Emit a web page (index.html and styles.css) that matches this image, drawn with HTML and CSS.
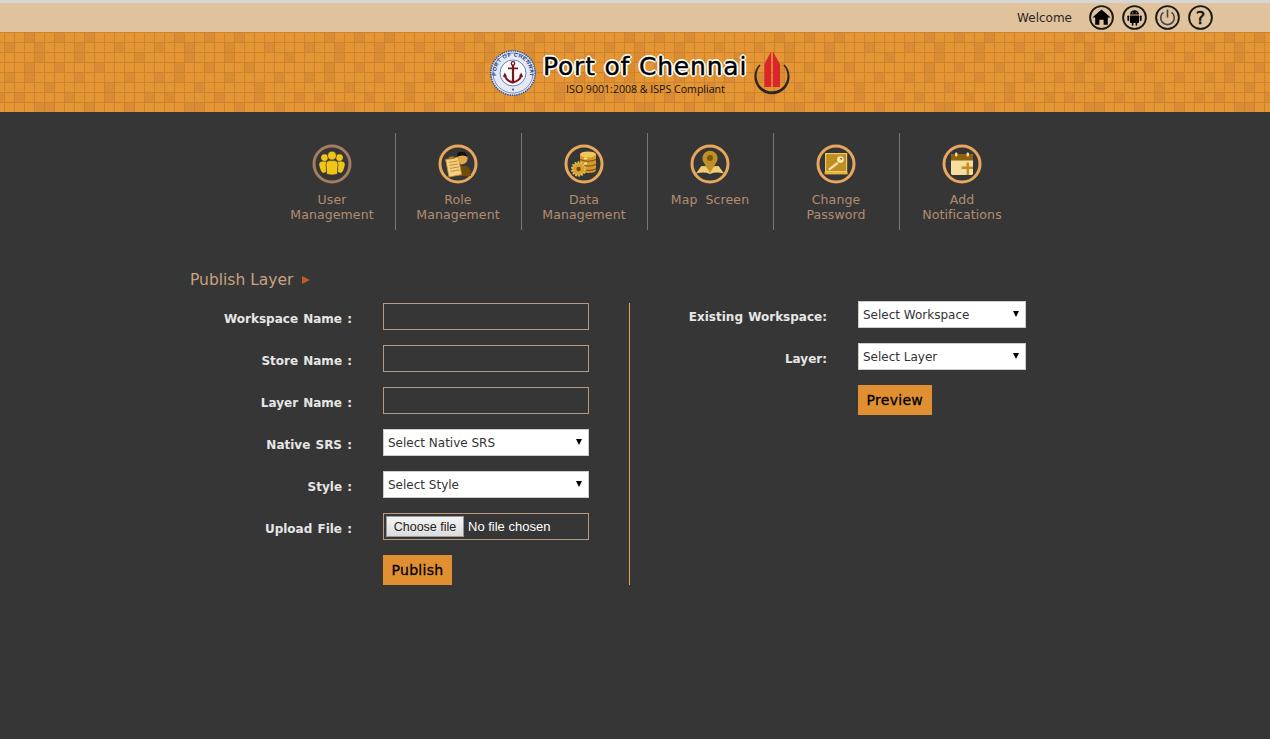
FILE: index.html
```html
<!DOCTYPE html>
<html lang="en">

<head>
    <meta charset="UTF-8">
    <meta name="viewport" content="width=device-width, initial-scale=1.0">
    <title>Publish Layer</title>
    <link rel="stylesheet" href="styles.css">
</head>

<body>

    <div class="top-bar">
        <span class="welcome">Welcome</span>
        <a class="top-icon" href="#" title="Home">
            <svg viewBox="0 0 25 25" width="25" height="25">
                <circle cx="12.5" cy="12.5" r="11.4" fill="none" stroke="#1a1a1a" stroke-width="1.9" />
                <path d="M12.5 4.4 L21.6 12.6 L18.8 12.6 L18.8 19.8 L14.6 19.8 L14.6 14.8 L10.4 14.8 L10.4 19.8 L6.2 19.8 L6.2 12.6 L3.4 12.6 Z" fill="#000" />
            </svg>
        </a>
        <a class="top-icon" href="#" title="Android">
            <svg viewBox="0 0 25 25" width="25" height="25">
                <circle cx="12.5" cy="12.5" r="11.4" fill="none" stroke="#1a1a1a" stroke-width="1.9" />
                <path d="M8 9.6 A4.5 4.3 0 0 1 17 9.6 Z" fill="#000" />
                <path d="M8 10.4 H17 V17.2 Q17 18 16 18 H15.2 V20 Q15.2 20.8 14.4 20.8 Q13.6 20.8 13.6 20 V18 H11.4 V20 Q11.4 20.8 10.6 20.8 Q9.8 20.8 9.8 20 V18 H9 Q8 18 8 17.2 Z" fill="#000" />
                <rect x="5.4" y="10.4" width="1.8" height="5.6" rx="0.9" fill="#000" />
                <rect x="17.8" y="10.4" width="1.8" height="5.6" rx="0.9" fill="#000" />
                <circle cx="10.7" cy="7.8" r="0.6" fill="#e0c29d" />
                <circle cx="14.3" cy="7.8" r="0.6" fill="#e0c29d" />
            </svg>
        </a>
        <a class="top-icon" href="#" title="Logout">
            <svg viewBox="0 0 25 25" width="25" height="25">
                <circle cx="12.5" cy="12.5" r="11.4" fill="none" stroke="#1a1a1a" stroke-width="1.9" />
                <path d="M8.4 7.4 A6.8 6.8 0 1 0 16.6 7.4" fill="none" stroke="#444" stroke-width="1.6" />
                <line x1="12.5" y1="4.6" x2="12.5" y2="12.5" stroke="#444" stroke-width="1.6" />
            </svg>
        </a>
        <a class="top-icon" href="#" title="Help">
            <svg viewBox="0 0 25 25" width="25" height="25">
                <circle cx="12.5" cy="12.5" r="11.4" fill="none" stroke="#1a1a1a" stroke-width="1.9" />
                <text class="help-mark" x="12.5" y="19" text-anchor="middle">?</text>
            </svg>
        </a>
    </div>

    <div class="banner">
        <svg class="banner-tiles" width="100%" height="80">
            <defs>
                <pattern id="tiles" x="4" y="0" width="150" height="80" patternUnits="userSpaceOnUse">
                    <rect width="150" height="80" fill="#e59533" />
                    <g fill="#da8c35">
                        <rect x="20" y="0" width="10" height="10" />
                        <rect x="50" y="0" width="10" height="10" />
                        <rect x="80" y="0" width="10" height="10" />
                        <rect x="0" y="10" width="10" height="10" />
                        <rect x="30" y="10" width="10" height="20" />
                        <rect x="70" y="10" width="10" height="20" />
                        <rect x="110" y="10" width="10" height="10" />
                        <rect x="130" y="20" width="10" height="10" />
                        <rect x="20" y="30" width="10" height="20" />
                        <rect x="50" y="30" width="10" height="10" />
                        <rect x="90" y="30" width="10" height="10" />
                        <rect x="120" y="40" width="10" height="10" />
                        <rect x="0" y="40" width="10" height="10" />
                        <rect x="70" y="40" width="10" height="10" />
                        <rect x="100" y="50" width="10" height="20" />
                        <rect x="40" y="50" width="10" height="10" />
                        <rect x="10" y="60" width="10" height="10" />
                        <rect x="60" y="60" width="10" height="10" />
                        <rect x="140" y="60" width="10" height="10" />
                        <rect x="30" y="70" width="20" height="10" />
                        <rect x="80" y="70" width="10" height="10" />
                        <rect x="120" y="70" width="10" height="10" />
                    </g>
                    <g fill="#cb832d">
                        <rect x="0" y="0" width="150" height="1" />
                        <rect x="0" y="10" width="150" height="1" />
                        <rect x="0" y="20" width="150" height="1" />
                        <rect x="0" y="30" width="150" height="1" />
                        <rect x="0" y="40" width="150" height="1" />
                        <rect x="0" y="50" width="150" height="1" />
                        <rect x="0" y="60" width="150" height="1" />
                        <rect x="0" y="70" width="150" height="1" />
                        <rect x="0" y="0" width="1" height="80" />
                        <rect x="10" y="0" width="1" height="80" />
                        <rect x="20" y="0" width="1" height="80" />
                        <rect x="30" y="0" width="1" height="80" />
                        <rect x="40" y="0" width="1" height="80" />
                        <rect x="50" y="0" width="1" height="80" />
                        <rect x="60" y="0" width="1" height="80" />
                        <rect x="70" y="0" width="1" height="80" />
                        <rect x="80" y="0" width="1" height="80" />
                        <rect x="90" y="0" width="1" height="80" />
                        <rect x="100" y="0" width="1" height="80" />
                        <rect x="110" y="0" width="1" height="80" />
                        <rect x="120" y="0" width="1" height="80" />
                        <rect x="130" y="0" width="1" height="80" />
                        <rect x="140" y="0" width="1" height="80" />
                    </g>
                </pattern>
            </defs>
            <rect width="100%" height="80" fill="url(#tiles)" />
        </svg>

        <div class="logo">
            <svg class="seal" viewBox="0 0 46 46" width="46" height="46">
                <circle cx="23" cy="23" r="22.2" fill="#e4e9f3" stroke="#3556a0" stroke-width="1.6" stroke-dasharray="1.4 0.9" />
                <circle cx="23" cy="23" r="20" fill="none" stroke="#4a68ab" stroke-width="0.7" />
                <circle cx="23" cy="23" r="13" fill="#fbfbfb" stroke="#4a68ab" stroke-width="0.8" />
                <path id="sealArc" d="M6.4 27 A17 17 0 1 1 39.6 27" fill="none" />
                <text class="seal-text"><textPath href="#sealArc" startOffset="50%" text-anchor="middle">PORT OF CHENNAI</textPath></text>
                <g fill="none" stroke="#7a1420" stroke-width="2.2">
                    <circle cx="23" cy="13.4" r="1.7" stroke-width="1.3" />
                    <line x1="23" y1="15" x2="23" y2="32.4" />
                    <line x1="18" y1="18.4" x2="28" y2="18.4" stroke-width="1.7" />
                    <path d="M14.8 25 Q15.4 30.6 23 32.4 Q30.6 30.6 31.2 25" />
                </g>
                <path d="M12.8 27 L14.8 22.4 L17 26.6 Z M33.2 27 L31.2 22.4 L29 26.6 Z" fill="#7a1420" />
                <circle cx="23" cy="39.6" r="1.1" fill="#3e5fa5" />
            </svg>
            <div class="logo-text">
                <div class="logo-name">Port of Chennai</div>
                <div class="logo-sub">ISO 9001:2008 &amp; ISPS Compliant</div>
            </div>
            <svg class="sail" viewBox="0 0 36 44" width="36" height="44">
                <path d="M5.4 13.4 A17.6 17.6 0 1 0 30.6 13.4 L29.4 14.6 A15.4 15.4 0 1 1 6.6 14.6 Z" fill="#2b2622" />
                <path d="M17.2 0.4 L17.2 36 L10.4 36 L10.4 13 Z" fill="#d8262c" />
                <path d="M18.8 0.4 L26 13 L26 36 L18.8 36 Z" fill="#d8262c" />
            </svg>
        </div>
    </div>

    <div class="main">
        <div class="nav">
            <a class="nav-item" href="#">
                <svg class="nav-icon" viewBox="0 0 40 40" width="40" height="40">
                    <circle cx="20" cy="20" r="18" fill="#363636" stroke="#a47d60" stroke-width="3" />
                    <g fill="#f0c517">
                        <circle cx="12.5" cy="13.6" r="3.4" />
                        <circle cx="27.5" cy="13.6" r="3.4" />
                        <path d="M7.2 20.6 Q7.2 17.6 10.4 17.6 H14 V28 L11 29 Q8 27 7.2 20.6 Z" />
                        <path d="M32.8 20.6 Q32.8 17.6 29.6 17.6 H26 V28 L29 29 Q32 27 32.8 20.6 Z" />
                    </g>
                    <circle cx="20" cy="11.6" r="4.4" fill="#f0c517" stroke="#363636" stroke-width="0.6" />
                    <path d="M14 20 Q14 16.6 17.6 16.6 H22.4 Q26 16.6 26 20 L25.4 30 Q20 32 14.6 30 Z" fill="#f0c517" stroke="#363636" stroke-width="0.6" />
                </svg>
                <span class="nav-label">User<br>Management</span>
            </a>
            <a class="nav-item" href="#">
                <svg class="nav-icon" viewBox="0 0 40 40" width="40" height="40">
                    <circle cx="20" cy="20" r="18" fill="#363636" stroke="#e7a75e" stroke-width="3" />
                    <path d="M15 32 Q15 23 21 22 H28 Q33 23 33 32 Z" fill="#6e4c10" />
                    <circle cx="23.6" cy="14.6" r="6" fill="#e0a94c" />
                    <path d="M18 13 Q18.6 7.8 23.6 7.8 Q28.8 7.8 29.4 13 Q26 10 18 13 Z" fill="#15110a" />
                    <path d="M7.6 15.4 L20.4 13.4 L23.6 30.6 L11 33 Z" fill="#f4cf83" stroke="#c58d2a" stroke-width="0.8" />
                    <path d="M10.8 18.4 L19.4 17 M11.4 21.4 L20 20 M12 24.4 L20.6 23 M12.6 27.4 L21.2 26" stroke="#b98426" stroke-width="0.9" />
                    <rect x="11" y="12.6" width="5" height="2.6" fill="#a87a2c" transform="rotate(-9 13 14)" />
                </svg>
                <span class="nav-label">Role<br>Management</span>
            </a>
            <a class="nav-item" href="#">
                <svg class="nav-icon" viewBox="0 0 40 40" width="40" height="40">
                    <circle cx="20" cy="20" r="18" fill="#363636" stroke="#e7a75e" stroke-width="3" />
                    <path d="M16 11 V26 Q16 29 24 29 Q32 29 32 26 V11 Z" fill="#d49a28" />
                    <ellipse cx="24" cy="10.4" rx="8" ry="3" fill="#f1c659" />
                    <path d="M16 15.6 Q24 19 32 15.6 M16 20.4 Q24 23.6 32 20.4 M16 25 Q24 28 32 25" fill="none" stroke="#7b5512" stroke-width="1.1" />
                    <rect x="20" y="13.6" width="3" height="1.8" fill="#f7e0a0" />
                    <rect x="20" y="18.6" width="3" height="1.8" fill="#f7e0a0" />
                    <circle cx="14.6" cy="25" r="6.6" fill="#d8a22f" stroke="#e8bd5a" stroke-width="2.2" stroke-dasharray="1.6 1.4" />
                    <circle cx="14.6" cy="25" r="2.2" fill="#6e4c10" />
                </svg>
                <span class="nav-label">Data<br>Management</span>
            </a>
            <a class="nav-item" href="#">
                <svg class="nav-icon" viewBox="0 0 40 40" width="40" height="40">
                    <circle cx="20" cy="20" r="18" fill="#363636" stroke="#e7a75e" stroke-width="3" />
                    <path d="M11.4 22 L6 29.6 Q14 27.4 20 30 Q26 27.4 34 29.6 L28.6 22 Q24 22 20 23 Q16 22 11.4 22 Z" fill="#f1cd74" />
                    <path d="M20 29 L13.4 18 A7.6 7.6 0 1 1 26.6 18 Z" fill="#c18f22" />
                    <circle cx="20" cy="14" r="3" fill="#7b5512" />
                </svg>
                <span class="nav-label">Map Screen</span>
            </a>
            <a class="nav-item" href="#">
                <svg class="nav-icon" viewBox="0 0 40 40" width="40" height="40">
                    <circle cx="20" cy="20" r="18" fill="#363636" stroke="#e7a75e" stroke-width="3" />
                    <rect x="9.6" y="9.6" width="21" height="18" fill="#c08d22" stroke="#f0c95f" stroke-width="1.2" />
                    <path d="M8.6 28 H31.6 V30.4 H8.6 Z" fill="#e6b43e" />
                    <path d="M12 25 L21 18 L22.6 19.8 L13.6 26.4 Z" fill="#f8e4ae" />
                    <circle cx="24.4" cy="15.6" r="3.4" fill="#f8e4ae" />
                    <circle cx="25.2" cy="14.8" r="1" fill="#8a6216" />
                </svg>
                <span class="nav-label">Change<br>Password</span>
            </a>
            <a class="nav-item" href="#">
                <svg class="nav-icon" viewBox="0 0 40 40" width="40" height="40">
                    <circle cx="20" cy="20" r="18" fill="#363636" stroke="#e7a75e" stroke-width="3" />
                    <rect x="9" y="10" width="22" height="21" rx="1.4" fill="#f7dd9d" />
                    <path d="M9 11.4 Q9 10 10.4 10 H29.6 Q31 10 31 11.4 V16.6 H9 Z" fill="#8d6311" />
                    <rect x="13" y="8.6" width="2.4" height="4" rx="1" fill="#f7dd9d" />
                    <rect x="24.6" y="8.6" width="2.4" height="4" rx="1" fill="#f7dd9d" />
                    <path d="M24.6 18.6 H27 V22.6 H31 V25 H27 V31 H24.6 V25 H19.6 V22.6 H24.6 Z" fill="#c08d22" />
                </svg>
                <span class="nav-label">Add<br>Notifications</span>
            </a>
        </div>

        <h2 class="page-title">Publish Layer</h2>

        <div class="form-area">
            <form class="form-left">
                <div class="form-row">
                    <label for="workspaceName">Workspace Name :</label>
                    <input type="text" id="workspaceName" name="workspaceName">
                </div>
                <div class="form-row">
                    <label for="storeName">Store Name :</label>
                    <input type="text" id="storeName" name="storeName">
                </div>
                <div class="form-row">
                    <label for="layerName">Layer Name :</label>
                    <input type="text" id="layerName" name="layerName">
                </div>
                <div class="form-row">
                    <label for="nativeSrs">Native SRS :</label>
                    <div class="select-box">
                        <select id="nativeSrs" name="nativeSrs">
                            <option>Select Native SRS</option>
                        </select>
                    </div>
                </div>
                <div class="form-row">
                    <label for="styleName">Style :</label>
                    <div class="select-box">
                        <select id="styleName" name="styleName">
                            <option>Select Style</option>
                        </select>
                    </div>
                </div>
                <div class="form-row">
                    <label for="uploadFile">Upload File :</label>
                    <div class="file-box">
                        <button type="button" id="uploadFile" class="file-button">Choose file</button>
                        <span class="file-name">No file chosen</span>
                    </div>
                </div>
                <div class="form-row">
                    <span></span>
                    <button type="button" class="form-button">Publish</button>
                </div>
            </form>

            <form class="form-right">
                <div class="form-row">
                    <label for="existingWorkspace">Existing Workspace:</label>
                    <div class="select-box">
                        <select id="existingWorkspace" name="existingWorkspace">
                            <option>Select Workspace</option>
                        </select>
                    </div>
                </div>
                <div class="form-row">
                    <label for="layerSelect">Layer:</label>
                    <div class="select-box">
                        <select id="layerSelect" name="layerSelect">
                            <option>Select Layer</option>
                        </select>
                    </div>
                </div>
                <div class="form-row">
                    <span></span>
                    <button type="button" class="form-button">Preview</button>
                </div>
            </form>
        </div>
    </div>

</body>

</html>
```

FILE: styles.css
```css
html,
body {
    height: 100%;
}

body {
    margin: 0;
    display: flex;
    flex-direction: column;
    border-top: 3px solid #d6d6d6;
    box-sizing: border-box;
    background-color: #363636;
    font-family: "DejaVu Sans", sans-serif;
    overflow: hidden;
}

.top-bar {
    height: 29px;
    display: flex;
    align-items: center;
    justify-content: flex-end;
    gap: 8px;
    padding-right: 57px;
    background-color: #e0c29d;
    flex-shrink: 0;
}

.welcome {
    font-size: 12px;
    color: #2a2622;
    margin-right: 9px;
}

.top-icon {
    display: block;
    height: 25px;
}

.help-mark {
    font-family: "DejaVu Sans", sans-serif;
    font-size: 18px;
    fill: #111;
    stroke: #111;
    stroke-width: 0.5px;
}

.banner {
    position: relative;
    height: 80px;
    flex-shrink: 0;
    display: flex;
    align-items: center;
    justify-content: center;
    padding-left: 10px;
    box-sizing: border-box;
}

.banner-tiles {
    position: absolute;
    top: 0;
    left: 0;
}

.logo {
    position: relative;
    display: flex;
    align-items: center;
    margin-top: 2px;
}

.seal {
    margin-right: 7px;
}

.seal-text {
    font-family: "Liberation Sans", sans-serif;
    font-size: 5.4px;
    font-weight: bold;
    letter-spacing: 0.5px;
    fill: #26407f;
}

.logo-text {
    width: 204px;
    margin-right: 7px;
    padding-top: 2px;
    text-align: center;
}

.logo-name {
    font-family: "DejaVu Sans", sans-serif;
    font-size: 25px;
    line-height: 30px;
    letter-spacing: 0.8px;
    white-space: nowrap;
    color: #000;
    -webkit-text-stroke: 0.4px #000;
    text-shadow: -1px -1px 0 #fff, 1px -1px 0 #fff, -1px 1px 0 #fff, 1px 1px 0 #fff, 0 -2px 0 #fff, 0 2px 0 #fff, -2px 0 0 #fff, 2px 0 0 #fff;
}

.logo-sub {
    font-family: "Open Sans", sans-serif;
    font-size: 10.6px;
    line-height: 14px;
    padding-left: 1px;
    white-space: nowrap;
    color: #111;
}

.main {
    flex: 1;
    background-color: #363636;
}

.nav {
    display: flex;
    margin: 21px 0 0 270px;
}

.nav-item {
    width: 126px;
    height: 97px;
    box-sizing: border-box;
    border-right: 1px solid #777;
    display: flex;
    flex-direction: column;
    align-items: center;
    padding: 11px 1px 0 0;
    text-decoration: none;
}

.nav-item:last-child {
    border-right: none;
    padding-right: 2px;
}

.nav-icon {
    display: block;
    margin-bottom: 8px;
}

.nav-label {
    font-size: 12.5px;
    line-height: 15px;
    letter-spacing: 0.1px;
    word-spacing: 4px;
    text-align: center;
    color: #b38d70;
    white-space: nowrap;
}

.page-title {
    display: flex;
    align-items: center;
    margin: 40px 0 0 190px;
    height: 20px;
    font-size: 15.5px;
    font-weight: normal;
    color: #c9a27f;
}

.page-title::after {
    content: "";
    margin-left: 9px;
    border-left: 8px solid #c05a2c;
    border-top: 4px solid transparent;
    border-bottom: 4px solid transparent;
}

.form-area {
    display: flex;
    align-items: flex-start;
    margin: 13px 0 0 190px;
}

.form-row {
    display: flex;
    align-items: flex-start;
    margin-bottom: 15px;
}

.form-row:last-child {
    margin-bottom: 0;
}

.form-left {
    width: 440px;
    box-sizing: border-box;
    padding-right: 40px;
    border-right: 1px solid #d8a845;
}

.form-left .form-row > :first-child {
    width: 162px;
    margin-right: 31px;
    flex-shrink: 0;
}

.form-right {
    margin: -2px 0 0 0;
}

.form-right .form-row > :first-child {
    width: 197px;
    margin-right: 31px;
    flex-shrink: 0;
}

label {
    display: block;
    padding-top: 9px;
    font-size: 12px;
    line-height: 15px;
    font-weight: bold;
    word-spacing: 1px;
    text-align: right;
    color: #e6e6e6;
    white-space: nowrap;
}

input[type="text"] {
    width: 207px;
    height: 27px;
    box-sizing: border-box;
    margin: 0;
    padding: 0;
    border: 1px solid #b89a80;
    background-color: transparent;
}

.file-box {
    display: flex;
    align-items: center;
    gap: 4px;
    width: 207px;
    height: 27px;
    box-sizing: border-box;
    padding: 0 2px;
    border: 1px solid #b89a80;
}

.file-button {
    width: 78px;
    height: 21px;
    padding: 0;
    font-family: "Liberation Sans", sans-serif;
    font-size: 12.5px;
    color: #222;
    background: linear-gradient(#f4f4f4, #dcdcdc);
    border: 1px solid #999;
    border-radius: 0;
}

.file-name {
    font-family: "Liberation Sans", sans-serif;
    font-size: 13px;
    color: #fff;
    white-space: nowrap;
}

.select-box {
    position: relative;
    width: 207px;
    height: 27px;
}

.form-right .select-box {
    width: 168px;
}

.select-box::after {
    content: "";
    position: absolute;
    top: 10px;
    right: 7px;
    border-top: 6px solid #000;
    border-left: 3px solid transparent;
    border-right: 3px solid transparent;
    pointer-events: none;
}

select {
    appearance: none;
    display: block;
    width: 100%;
    height: 100%;
    margin: 0;
    padding: 0 4px;
    box-sizing: border-box;
    border: 1px solid #ccc;
    border-radius: 0;
    background-color: #fff;
    font-family: "DejaVu Sans", sans-serif;
    font-size: 12px;
    color: #333;
}

button.form-button {
    height: 30px;
    padding: 0 8.5px;
    border: none;
    background-color: #e09030;
    color: #000;
    font-family: "DejaVu Sans", sans-serif;
    font-size: 14px;
    letter-spacing: 0.3px;
    -webkit-text-stroke: 0.3px #000;
    cursor: pointer;
}
```
